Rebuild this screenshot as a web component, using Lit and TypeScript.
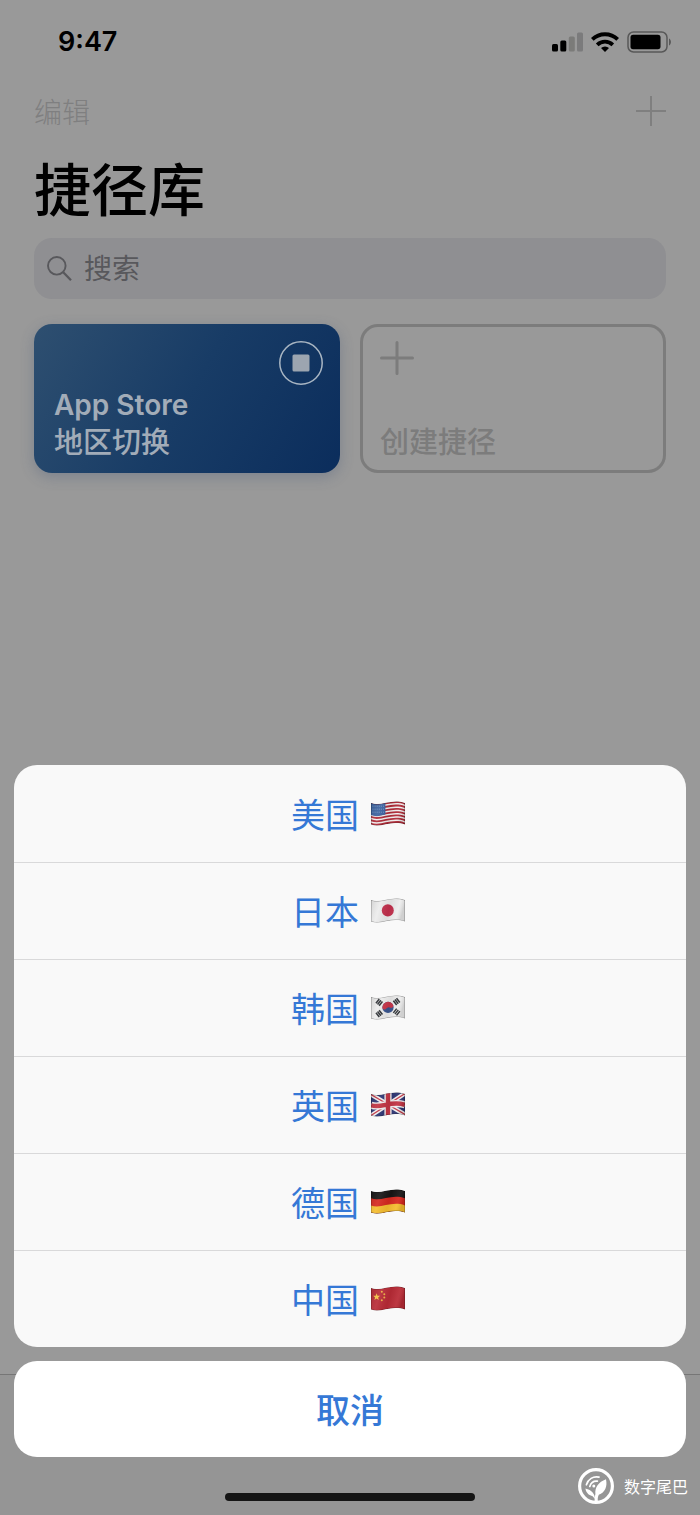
import { LitElement, html, css, svg, nothing } from "lit";
import { customElement, property } from "lit/decorators.js";

/** Path of a horizontal band of a waving flag, between two heights at the hoist. */
const band = (y0: number, y1: number) =>
  `M0 ${y0}C10 ${y0 + 4} 20 ${y0 - 5} 34 ${y0}V${y1}C20 ${y1 - 5} 10 ${y1 + 4} 0 ${y1}Z`;

const cloth = band(2, 23.5);

const stripes = Array.from({ length: 6 }, (_, i) => 3.65 + i * 3.3);

const trigram = (x: number, y: number, angle: number) => svg`
  <g transform="translate(${x} ${y}) rotate(${angle})" stroke="#2c2f33" stroke-width="1.5">
    <path d="M-2.7 -2H2.7M-2.7 0H2.7M-2.7 2H2.7" />
  </g>`;

const flags: Record<string, unknown> = {
  us: svg`
    <path d=${cloth} fill="#b02a37" />
    ${stripes.map((y) => svg`<path d=${band(y, y + 1.5)} fill="#f3efef" />`)}
    <path d="M0 2C5 4 9 3.4 14.4 2V13.6C9 15 5 16 0 14Z" fill="#3b62a0" />
    <path d="M1.5 5.2H13M1.5 8.2H13M1.5 11.2H13" stroke="#93abd0" stroke-width=".8" stroke-dasharray=".9 1.2" />`,
  jp: svg`
    <path d=${cloth} fill="#ececec" />
    <ellipse cx="16.8" cy="12.4" rx="6" ry="6.2" fill="#c22f4c" />`,
  kr: svg`
    <path d=${cloth} fill="#ececec" />
    <circle cx="17" cy="12.4" r="5.6" fill="#38558f" />
    <path d="M11.6 13.8A5.6 5.6 0 0 1 22.5 11C20.8 14.6 18.4 12 17 12.4C14.8 13 14.4 16 11.6 13.8Z" fill="#c8364a" />
    ${trigram(8.2, 7.4, -52)} ${trigram(25.6, 6.6, 52)}
    ${trigram(8.2, 18.6, 52)} ${trigram(25.6, 17, -52)}`,
  gb: svg`
    <path d=${cloth} fill="#2e3674" />
    <path d="M0 2.5L34 22.5M0 23.5L34 1.5" stroke="#f1eeee" stroke-width="4.4" />
    <path d="M0 2.5L34 22.5M0 23.5L34 1.5" stroke="#c23443" stroke-width="1.4" />
    <path d="M17 0V26M0 13.2C10 17 20 8 34 12.8" stroke="#f1eeee" stroke-width="7.2" fill="none" />
    <path d="M17 0V26M0 13.2C10 17 20 8 34 12.8" stroke="#c23443" stroke-width="4.4" fill="none" />`,
  de: svg`
    <path d=${cloth} fill="#171515" />
    <path d=${band(9.2, 23.5)} fill="#d6281f" />
    <path d=${band(16.4, 23.5)} fill="#f5bd2f" />`,
  cn: svg`
    <path d=${cloth} fill="#b92b36" />
    <path d="M5.6 7.2L6.5 9.7L9.1 9.8L7.1 11.4L7.8 13.9L5.6 12.5L3.4 13.9L4.1 11.4L2.1 9.8L4.7 9.7Z" fill="#f6c544" />
    <g fill="#eeb043">
      <circle cx="10.8" cy="5.8" r="1" /><circle cx="13.3" cy="8.2" r="1" />
      <circle cx="13.3" cy="11.6" r="1" /><circle cx="10.8" cy="14.2" r="1" />
    </g>`,
};

@customElement("country-flag")
class CountryFlag extends LitElement {
  @property() code = "us";

  static styles = css`
    :host { display: block; width: 38px; height: 26px; }
    .flag { display: block; width: 34px; height: 26px; }
  `;

  render() {
    return html`
      <svg class="flag" viewBox="0 0 34 26" fill="none" aria-hidden="true">
        <defs>
          <clipPath id="cloth"><path d=${cloth} /></clipPath>
          <linearGradient id="fold" x1="0" y1="0" x2="1" y2="0.2">
            <stop offset="0" stop-color="#000" stop-opacity=".12" />
            <stop offset=".3" stop-color="#fff" stop-opacity=".08" />
            <stop offset=".6" stop-color="#000" stop-opacity=".06" />
            <stop offset=".85" stop-color="#fff" stop-opacity=".06" />
            <stop offset="1" stop-color="#000" stop-opacity=".12" />
          </linearGradient>
        </defs>
        <g clip-path="url(#cloth)">
          ${flags[this.code] ?? nothing}
          <path d=${cloth} fill="url(#fold)" stroke="#000" stroke-opacity=".35" />
        </g>
      </svg>
    `;
  }
}

@customElement("action-sheet")
class ActionSheet extends LitElement {
  @property({ attribute: false }) options: { label: string; code: string }[] = [];

  static styles = css`
    :host { display: flex; flex-direction: column; gap: 14px; }
    .options {
      display: flex;
      flex-direction: column;
      border-radius: 23px;
      overflow: hidden;
      background: #f9f9f9;
    }
    button {
      box-sizing: border-box;
      width: 100%;
      height: 97px;
      margin: 0;
      padding: 0;
      border: 0;
      display: flex;
      align-items: center;
      justify-content: center;
      gap: 12px;
      background: none;
      color: #3578d6;
      font: inherit;
      font-size: 34px;
      line-height: 48px;
      cursor: pointer;
    }
    .option + .option { border-top: 1px solid #d9d9da; }
    .cancel { height: 96px; border-radius: 23px; background: #fff; font-weight: 500; }
  `;

  render() {
    return html`
      <div class="options">
        ${this.options.map(
          (o) => html`
            <button class="option">
              <span>${o.label}</span><country-flag code=${o.code}></country-flag>
            </button>
          `
        )}
      </div>
      <button class="cancel">取消</button>
    `;
  }
}

@customElement("app-root")
class AppRoot extends LitElement {
  private countries = [
    { label: "美国", code: "us" },
    { label: "日本", code: "jp" },
    { label: "韩国", code: "kr" },
    { label: "英国", code: "gb" },
    { label: "德国", code: "de" },
    { label: "中国", code: "cn" },
  ];

  static styles = css`
    :host {
      display: grid;
      min-height: 100vh;
      background: #999;
      color: #000;
      font-family: "Noto Sans CJK SC", Inter, sans-serif;
    }
    .frame { position: relative; display: grid; }
    .library, .overlay { grid-area: 1 / 1; }
    .library { display: flex; flex-direction: column; }
    svg { display: block; }
    button {
      margin: 0;
      padding: 0;
      border: 0;
      background: none;
      font: inherit;
      text-align: left;
      cursor: pointer;
    }

    .status {
      height: 84px;
      padding: 0 28px 0 58px;
      display: flex;
      align-items: center;
      justify-content: space-between;
    }
    .time, .latin { font-family: Inter, sans-serif; font-weight: 600; }
    .time { font-size: 27px; line-height: 32px; }
    .indicators { display: flex; align-items: center; gap: 8px; }

    .content { padding: 0 34px; }
    .toolbar { height: 54px; display: flex; align-items: center; justify-content: space-between; }
    .edit { color: #7f7f80; font-size: 28px; line-height: 40px; font-weight: 300; }
    h1 { margin: 12px 0 16px; font-size: 57px; line-height: 72px; font-weight: 500; }

    .search {
      height: 61px;
      padding: 0 13px;
      border-radius: 18px;
      display: flex;
      align-items: center;
      gap: 12px;
      background: #8f8f92;
      color: #58585c;
    }
    .search input {
      flex: 1;
      min-width: 0;
      margin: 0;
      padding: 0;
      border: 0;
      outline: 0;
      background: none;
      color: #000;
      font-family: Inter, "Noto Sans CJK SC", sans-serif;
      font-size: 28px;
      line-height: 40px;
    }
    .search input::placeholder { color: #58585c; opacity: 1; }

    .cards {
      margin-top: 25px;
      display: grid;
      grid-template-columns: 1fr 1fr;
      gap: 20px;
    }
    .card {
      box-sizing: border-box;
      height: 149px;
      padding: 17px 17px 15px 20px;
      border-radius: 18px;
      display: flex;
      flex-direction: column;
      justify-content: space-between;
      font-size: 29px;
      line-height: 35px;
      font-weight: 500;
    }
    .shortcut {
      background: linear-gradient(120deg, #2e4f70, #183c66 50%, #0b2d5c);
      box-shadow: 0 4px 14px rgba(60, 80, 115, 0.3);
      color: #a2acb8;
    }
    .name { display: flex; flex-direction: column; }
    .latin { font-size: 28px; }
    .stop { align-self: flex-end; }
    .create { border: 3px solid #7c7c7c; padding: 14px 17px 12px; color: #7c7c7c; }

    .tabs { height: 140px; margin-top: auto; border-top: 1px solid #767676; background: #959595; }

    .overlay {
      z-index: 1;
      padding: 14px;
      display: flex;
      flex-direction: column;
      justify-content: flex-end;
      pointer-events: none;
    }
    action-sheet { pointer-events: auto; }
    .home {
      width: 250px;
      height: 8px;
      margin: 36px auto 0;
      border-radius: 4px;
      background: #151515;
    }
    .watermark {
      position: absolute;
      z-index: 2;
      right: 12px;
      bottom: 11px;
      display: flex;
      align-items: center;
      gap: 10px;
      color: #fff;
      font-size: 16px;
      line-height: 24px;
    }
  `;

  render() {
    return html`
      <div class="frame">
        <main class="library">
          <div class="status">
            <span class="time">9:47</span>
            <div class="indicators">
              <svg width="31" height="20" viewBox="0 0 31 20" aria-hidden="true">
                <rect x="0" y="12" width="6" height="7.5" rx="1.5" />
                <rect x="8.3" y="8.5" width="6" height="11" rx="1.5" />
                <rect x="16.8" y="4.5" width="6" height="15" rx="1.5" fill="#7b7b79" />
                <rect x="25" y="0.5" width="6" height="19" rx="1.5" fill="#7b7b7c" />
              </svg>
              <svg width="28" height="20" viewBox="0 0 28 20" fill="none" stroke="#000" stroke-width="4" aria-hidden="true">
                <path d="M1.3 7.4A18.4 18.4 0 0 1 26.7 7.4" />
                <path d="M6.2 12.8A11.4 11.4 0 0 1 21.8 12.8" stroke-width="3.8" />
                <path d="M14 20L10 16A5.8 5.8 0 0 1 18 16Z" fill="#000" stroke="none" />
              </svg>
              <svg width="45" height="22" viewBox="0 0 45 22" aria-hidden="true">
                <rect x="1" y="1" width="39" height="20" rx="5.5" fill="none" stroke="#585858" stroke-width="1.5" />
                <rect x="3.5" y="3.8" width="30" height="14.4" rx="2.6" />
                <path d="M42 7.5C44.6 8.6 44.6 13.4 42 14.5Z" fill="#585858" />
              </svg>
            </div>
          </div>

          <div class="content">
            <div class="toolbar">
              <button class="edit">编辑</button>
              <button aria-label="添加">
                <svg width="30" height="30" viewBox="0 0 30 30" stroke="#7f7f7f" stroke-width="2">
                  <path d="M15 0V30M0 15H30" />
                </svg>
              </button>
            </div>
            <h1>捷径库</h1>
            <label class="search">
              <svg width="25" height="25" viewBox="0 0 25 25" fill="none" stroke="currentColor" stroke-width="1.9" aria-hidden="true">
                <circle cx="9.8" cy="9.8" r="8.8" />
                <path d="M16 16L24 24.2" stroke-width="2.3" />
              </svg>
              <input type="search" placeholder="搜索" aria-label="搜索" />
            </label>
            <div class="cards">
              <button class="card shortcut">
                <svg class="stop" width="44" height="44" viewBox="0 0 44 44" aria-hidden="true">
                  <circle cx="22" cy="22" r="21.2" fill="none" stroke="#a9b6c3" stroke-width="1.5" />
                  <rect x="13.5" y="13.5" width="17" height="17" rx="1.5" fill="#9ca5b0" />
                </svg>
                <span class="name"><span class="latin">App Store</span><span>地区切换</span></span>
              </button>
              <button class="card create">
                <svg width="34" height="34" viewBox="0 0 34 34" stroke="#7c7c7c" stroke-width="3" stroke-linecap="round" aria-hidden="true">
                  <path d="M17 1.5V32.5M1.5 17H32.5" />
                </svg>
                <span>创建捷径</span>
              </button>
            </div>
          </div>
          <div class="tabs"></div>
        </main>

        <div class="overlay">
          <action-sheet .options=${this.countries}></action-sheet>
          <div class="home"></div>
        </div>

        <div class="watermark">
          <svg width="36" height="36" viewBox="0 0 36 36" fill="none" stroke="#fff" aria-hidden="true">
            <circle cx="18" cy="18" r="16.4" stroke-width="3.2" />
            <path d="M16.6 33C16.6 30 17 27.6 17.4 26C16.6 19.6 20.4 14 28 11.2C29.6 18.6 27 24.4 20.8 26.8C19.8 28.6 19.6 30.6 19.8 33Z" fill="#fff" stroke="none" />
            <path d="M17 31C17 26.4 14 22 7.4 20.6C8.2 25.4 11.4 27.6 14.6 28.2Z" fill="#fff" stroke="none" />
            <path d="M8.4 16.8C10 11 15.2 8 21 9.2M11.8 18.4C13 14.6 15.8 12.8 19.4 13.2" stroke-width="1.7" stroke-linecap="round" />
            <circle cx="15.8" cy="18" r="1.5" fill="#fff" stroke="none" />
          </svg>
          <span>数字尾巴</span>
        </div>
      </div>
    `;
  }
}
